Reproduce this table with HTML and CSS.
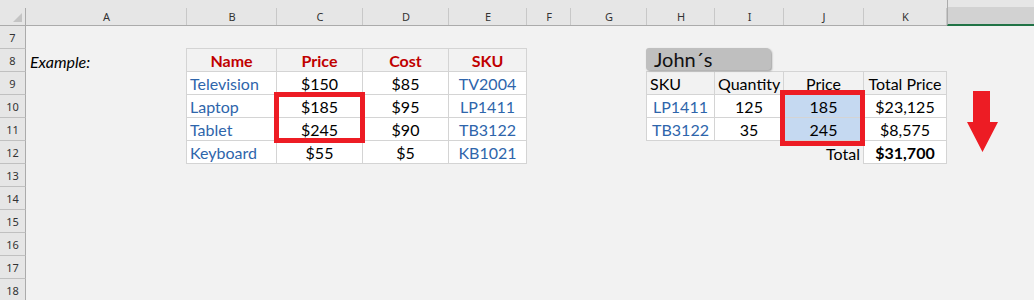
FILE: index.html
```html
<!DOCTYPE html>
<html>
<head>
<meta charset="utf-8">
<link rel="stylesheet" href="styles.css">
</head>
<body>
<div class="sheet">
  <div class="corner"><span class="tri"></span></div>
  <div class="ch">A</div><div class="ch">B</div><div class="ch">C</div><div class="ch">D</div><div class="ch">E</div><div class="ch">F</div><div class="ch">G</div><div class="ch">H</div><div class="ch">I</div><div class="ch">J</div><div class="ch">K</div><div class="ch sel"></div>

  <div class="rh">7</div><div class="span12"></div>

  <div class="rh">8</div>
  <div class="cell al ex">Example:</div>
  <div class="cell tc top lft hd ac">Name</div>
  <div class="cell tc top hd ac">Price</div>
  <div class="cell tc top hd ac">Cost</div>
  <div class="cell tc top hd ac">SKU</div>
  <div class="span2"></div>
  <div class="span2 shape-cell"><div class="shape">John´s</div></div>
  <div class="span3"></div>

  <div class="rh">9</div>
  <div class="cell"></div>
  <div class="cell tc lft wb al blue">Television</div>
  <div class="cell tc wb ac">$150</div>
  <div class="cell tc wb ac">$85</div>
  <div class="cell tc wb ac blue">TV2004</div>
  <div class="span2"></div>
  <div class="cell tc top lft al">SKU</div>
  <div class="cell tc top al">Quantity</div>
  <div class="cell tc top ac">Price</div>
  <div class="cell tc top ac">Total Price</div>
  <div class="cell"></div>

  <div class="rh">10</div>
  <div class="cell"></div>
  <div class="cell tc lft wb al blue">Laptop</div>
  <div class="cell tc wb ac">$185</div>
  <div class="cell tc wb ac">$95</div>
  <div class="cell tc wb ac blue">LP1411</div>
  <div class="span2"></div>
  <div class="cell tc lft wb ac blue">LP1411</div>
  <div class="cell tc wb ac">125</div>
  <div class="cell tc fill ac">185</div>
  <div class="cell tc wb ac">$23,125</div>
  <div class="cell"></div>

  <div class="rh">11</div>
  <div class="cell"></div>
  <div class="cell tc lft wb al blue">Tablet</div>
  <div class="cell tc wb ac">$245</div>
  <div class="cell tc wb ac">$90</div>
  <div class="cell tc wb ac blue">TB3122</div>
  <div class="span2"></div>
  <div class="cell tc lft wb ac blue">TB3122</div>
  <div class="cell tc wb ac">35</div>
  <div class="cell tc fill ac">245</div>
  <div class="cell tc wb ac">$8,575</div>
  <div class="cell"></div>

  <div class="rh">12</div>
  <div class="cell"></div>
  <div class="cell tc lft wb al blue">Keyboard</div>
  <div class="cell tc wb ac">$55</div>
  <div class="cell tc wb ac">$5</div>
  <div class="cell tc wb ac blue">KB1021</div>
  <div class="span2"></div>
  <div class="span2"></div>
  <div class="cell ar rb">Total</div>
  <div class="cell tc wb ac bold">$31,700</div>
  <div class="cell"></div>

  <div class="rh">13</div><div class="span12"></div>
  <div class="rh">14</div><div class="span12"></div>
  <div class="rh">15</div><div class="span12"></div>
  <div class="rh">16</div><div class="span12"></div>
  <div class="rh">17</div><div class="span12"></div>
  <div class="rh">18</div><div class="span12"></div>

  <div class="mark mark-price"></div>
  <div class="mark mark-j"></div>
  <svg class="arrow" width="33" height="63" viewBox="0 0 33 63"><polygon points="7,1 24,1 24,32 32,32 16.5,62 1,32 7,32" fill="#ed1c24"/></svg>
</div>
</body>
</html>
```

FILE: styles.css
```css
html, body {
  margin: 0;
  padding: 0;
  background: #f2f2f2;
  overflow: hidden;
}
.sheet {
  position: relative;
  display: grid;
  grid-template-columns: 26px 161px 90px 86px 86px 78px 44px 76px 68px 69px 80px 83px 1fr;
  grid-template-rows: 26px repeat(12, 23px);
  width: 1034px;
  height: 300px;
  background: #f2f2f2;
  font-family: Lato, "Noto Sans", sans-serif;
  font-size: 16px;
  color: #000;
}
.sheet > div { box-sizing: border-box; min-width: 0; }

.corner {
  background: linear-gradient(#ababab, #ababab) right bottom / 1px 17px no-repeat, #e6e6e6;
  border-bottom: 1px solid #ababab;
  position: relative;
}
.tri {
  position: absolute;
  left: 13px;
  top: 13px;
  width: 0;
  height: 0;
  border-left: 9px solid transparent;
  border-bottom: 9px solid #c4c4c4;
}
.ch {
  background: linear-gradient(#c8c8c8, #c8c8c8) right bottom / 1px 17px no-repeat, #e6e6e6;
  border-bottom: 1px solid #ababab;
  font-family: "Noto Sans", sans-serif;
  font-size: 11px;
  color: #333;
  display: flex;
  justify-content: center;
  align-items: center;
  padding-top: 8px;
}
.ch.sel {
  background: linear-gradient(#d2d2d2, #d2d2d2) left bottom / 100% 17px no-repeat, #e6e6e6;
  border-left: 1px solid #ababab;
  border-bottom: 2px solid #217346;
}
.rh {
  background: #e6e6e6;
  border-right: 1px solid #ababab;
  border-bottom: 1px solid #c0c0c0;
  font-family: "Noto Sans", sans-serif;
  font-size: 11px;
  color: #333;
  display: flex;
  justify-content: center;
  align-items: center;
  padding-top: 1px;
}
.span12 { grid-column: span 12; }
.span2 { grid-column: span 2; }
.span3 { grid-column: span 3; }

.cell {
  display: flex;
  align-items: flex-end;
  line-height: 20px;
  padding: 0 3px;
  white-space: nowrap;
}
.al { justify-content: flex-start; }
.ac { justify-content: center; }
.ar { justify-content: flex-end; }

.tc {
  border-right: 1px solid #d4d4d4;
  border-bottom: 1px solid #d4d4d4;
}
.top { box-shadow: 0 -1px 0 #d4d4d4; }
.lft { box-shadow: -1px 0 0 #d4d4d4; }
.top.lft { box-shadow: 0 -1px 0 #d4d4d4, -1px 0 0 #d4d4d4, -1px -1px 0 #d4d4d4; }
.rb { border-right: 1px solid #d4d4d4; }
.wb { background: #fff; }
.fill { background: #c5d9f1; }
.hd { color: #c00000; font-weight: bold; }
.blue { color: #2e65ab; }
.bold { font-weight: bold; }
.ex { font-style: italic; padding-left: 4px; }

.shape-cell { position: relative; }
.shape {
  position: absolute;
  left: -1px;
  top: -1px;
  width: 125px;
  height: 22px;
  box-sizing: border-box;
  background: #bfbfbf;
  border-radius: 3px 5px 3px 3px;
  box-shadow: 1px 1px 2px rgba(0, 0, 0, 0.35);
  font-size: 20px;
  line-height: 22px;
  padding-left: 8px;
  color: #111;
}

.mark {
  position: absolute;
  box-sizing: border-box;
  border: 5px solid #ed1c24;
}
.mark-price { left: 274px; top: 92px; width: 91px; height: 51px; }
.mark-j { left: 780px; top: 90px; width: 85px; height: 56px; }
.arrow {
  position: absolute;
  left: 966px;
  top: 90px;
}
```
